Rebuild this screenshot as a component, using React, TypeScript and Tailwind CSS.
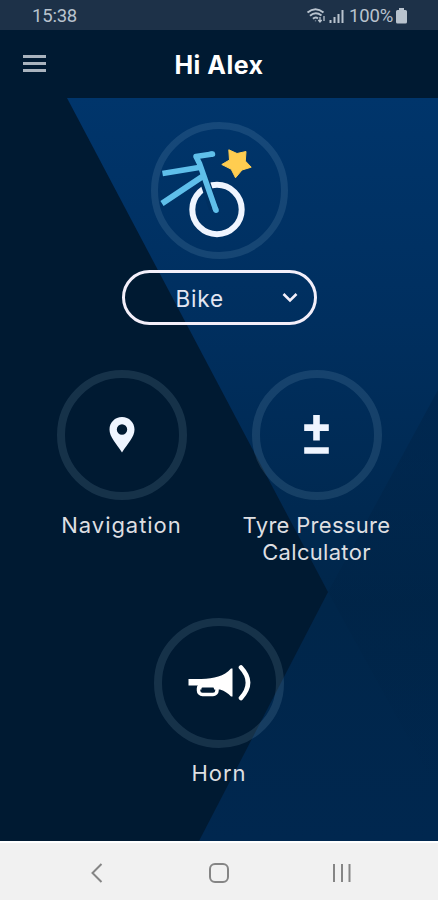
import type { ReactNode } from "react";

function StatusBar() {
  return (
    <div className="flex h-[30px] items-center justify-between bg-[#1d3148] pr-[31px] pl-[32px] font-[Roboto,sans-serif] text-[18.5px] text-[#b9c3ce]">
      <span className="pt-[3px] tracking-[-0.2px]">15:38</span>
      <div className="flex items-center pt-[2px]">
        <svg width="40" height="20" viewBox="0 0 40 20" fill="none" stroke="currentColor">
          <path d="M1.500 6.500Q9.500 0 17.500 6.500M4 9.800Q9.500 5 15.500 9.500M7 12.800Q9.500 10.500 12 12.500" strokeWidth="2" />
          <path d="M9.500 14.500v.8M14 11v5M12.300 14l1.700 2 1.700-2M18 10v5" strokeWidth="1.300" />
          <path d="M24.500 14v3M28.500 11v6M32.500 8v9M36.500 4v13" strokeWidth="2" />
        </svg>
        <span className="ml-[3px] pt-px tracking-[-0.2px]">100%</span>
        <svg className="ml-[3px]" width="11" height="16" viewBox="0 0 11 16" fill="currentColor">
          <path d="M3 0h5v2h1.500Q11 2 11 3.500V14q0 1.500-1.500 1.500h-8Q0 15.500 0 14V3.500Q0 2 1.500 2H3z" />
        </svg>
      </div>
    </div>
  );
}

function Header() {
  return (
    <header className="grid h-[68px] grid-cols-[60px_1fr_60px] items-center bg-[#001a32]">
      <button aria-label="Menu" className="-mt-px ml-[23px] flex w-[23px] flex-col gap-[4px]">
        <span className="h-[3px] bg-[#a9b3be]" />
        <span className="h-[3px] bg-[#a9b3be]" />
        <span className="h-[3px] bg-[#a9b3be]" />
      </button>
      <h1 className="pt-[3px] text-center text-[25px] font-bold tracking-[0.5px] text-white">Hi Alex</h1>
    </header>
  );
}

function Backdrop() {
  return (
    <svg className="absolute inset-0" width="438" height="743" viewBox="0 0 438 743">
      <defs>
        <linearGradient id="sky" x1="0" y1="0" x2="0" y2="1">
          <stop offset="0" stopColor="#00356b" />
          <stop offset="0.300" stopColor="#002f5f" />
          <stop offset="0.680" stopColor="#00264a" />
          <stop offset="1" stopColor="#00274f" />
        </linearGradient>
        <linearGradient id="shade" x1="0" y1="0" x2="0" y2="1">
          <stop offset="0" stopColor="#001c3a" stopOpacity="0.300" />
          <stop offset="1" stopColor="#001c3a" stopOpacity="0" />
        </linearGradient>
      </defs>
      <path fill="url(#sky)" d="M0 0h438v743H0z" />
      <path fill="url(#shade)" d="M438 292L328 494l110 200z" />
      <path fill="#001a32" d="M0 0h67l261 494-129 249H0z" />
    </svg>
  );
}

function BikeIcon() {
  return (
    <svg className="overflow-visible" width="104" height="104" viewBox="0 0 104 104" fill="none">
      <circle cx="50" cy="70.500" r="24.700" stroke="#eff5ff" strokeWidth="6" />
      <path d="M37 40l10 30" stroke="#003061" strokeWidth="10" />
      <path d="M-4.500 34.500L32 28.500M-5 64.500L37 36.500" stroke="#5fbfea" strokeWidth="5.800" />
      <path d="M45.800 15L29 17.500l3.500 7L49 71.500" stroke="#5fbfea" strokeWidth="5.500" strokeLinejoin="round" />
      <path d="M44 15.200l1.500-.2M48.500 70l.5 1.200" stroke="#5fbfea" strokeWidth="5.500" strokeLinecap="round" />
      <path
        d="M61.800 10.800l8.200 3.700 9-2-.7 9.500 5.900 6.200-9.200 2.800-6.500 7.800-4.300-8.600-9.400-4.700 7.700-4.500z"
        fill="#ffcd50"
        stroke="#ffcd50"
        strokeLinejoin="round"
      />
    </svg>
  );
}

function PinIcon() {
  return (
    <svg width="26" height="36" viewBox="0 0 26 36">
      <path
        fill="#eff5ff"
        fillRule="evenodd"
        d="M13 0C5.900 0 .5 5.500.5 12.500.5 20 7 26 13 35.500 19 26 25.500 20 25.500 12.500 25.500 5.500 20.100 0 13 0m0 7.300a5.200 5.200 0 1 1 0 10.400 5.200 5.200 0 0 1 0-10.400"
      />
    </svg>
  );
}

function PlusMinusIcon() {
  return (
    <svg width="26" height="40" viewBox="0 0 26 40" fill="#eff5ff">
      <path d="M9.200 0h6.600v9.300h9v6.600h-9V25.500H9.200V15.900h-9V9.300h9zM.2 32.300h24.600v6.400H.2z" />
    </svg>
  );
}

function HornIcon() {
  return (
    <svg width="64" height="36" viewBox="0 0 64 36" fill="none">
      <path
        fill="#fff"
        d="M1.500 14h13C27 13.500 37 11.500 44 3.500h1.500V31.500h-1.500c-3-3-6-5.500-11-7H11v-4H1.500z"
      />
      <rect x="11.500" y="19.500" width="18.500" height="10" rx="4" stroke="#fff" strokeWidth="3.500" />
      <rect x="14.500" y="22.500" width="12.500" height="4" rx="1" fill="#001a32" />
      <path d="M54 2.500q14 15 0 30.500" stroke="#fff" strokeWidth="4.600" strokeLinecap="round" />
    </svg>
  );
}

type TileProps = {
  label: ReactNode;
  labelClass?: string;
  children: ReactNode;
};

function Tile({ label, labelClass = "tracking-[0.3px]", children }: TileProps) {
  return (
    <button className="flex w-[195px] flex-col items-center">
      <span className="flex size-[130px] items-center justify-center rounded-full border-8 border-[#9cc8dc]/14">
        {children}
      </span>
      <span className={`mt-[12px] text-center text-[22px] leading-[27px] text-[#dedfe2] ${labelClass}`}>
        {label}
      </span>
    </button>
  );
}

function NavBar() {
  return (
    <nav className="flex h-[59px] items-center justify-between border-t-2 border-white bg-[#f1f1f1] px-[85px] pt-[2px] text-[#858585]">
      <svg width="24" height="24" viewBox="0 0 24 24" fill="none" stroke="currentColor" strokeWidth="2">
        <path d="M16.500 3L7.500 12l9 9" />
      </svg>
      <svg width="24" height="24" viewBox="0 0 24 24" fill="none" stroke="currentColor" strokeWidth="2">
        <rect x="3" y="3" width="18" height="18" rx="5" />
      </svg>
      <svg width="24" height="24" viewBox="0 0 24 24" fill="none" stroke="currentColor" strokeWidth="2">
        <path d="M5 3v18M13 3v18M20.500 3v18" />
      </svg>
    </nav>
  );
}

export default function App() {
  return (
    <div className="flex h-[900px] w-[438px] flex-col overflow-hidden bg-[#001a32] font-[Inter,sans-serif]">
      <StatusBar />
      <Header />

      <main className="relative h-[743px]">
        <Backdrop />
        <div className="relative flex flex-col items-center pt-[24px]">
          <div className="flex size-[137px] items-center justify-center rounded-full border-[7px] border-[#9cc8dc]/14">
            <BikeIcon />
          </div>

          <button className="mt-[11px] flex h-[55px] w-[195px] items-center rounded-full border-3 border-[#f3effa] pr-[15px] pl-[51px] text-[22.5px] tracking-[0.8px] text-[#e3e6f2]">
            <span className="pt-[2px]">Bike</span>
            <svg className="ml-auto" width="18" height="12" viewBox="0 0 18 12" fill="none" stroke="#f3effa" strokeWidth="2.600">
              <path d="M2.500 2l6.500 6.500L15.500 2" />
            </svg>
          </button>

          <div className="mt-[45px] flex">
            <Tile label="Navigation" labelClass="tracking-[0.95px]">
              <PinIcon />
            </Tile>
            <Tile label={<>Tyre Pressure<br />Calculator</>}>
              <PlusMinusIcon />
            </Tile>
          </div>

          <div className="mt-[52px]">
            <Tile label="Horn" labelClass="tracking-[0.9px]">
              <HornIcon />
            </Tile>
          </div>
        </div>
      </main>

      <NavBar />
    </div>
  );
}
